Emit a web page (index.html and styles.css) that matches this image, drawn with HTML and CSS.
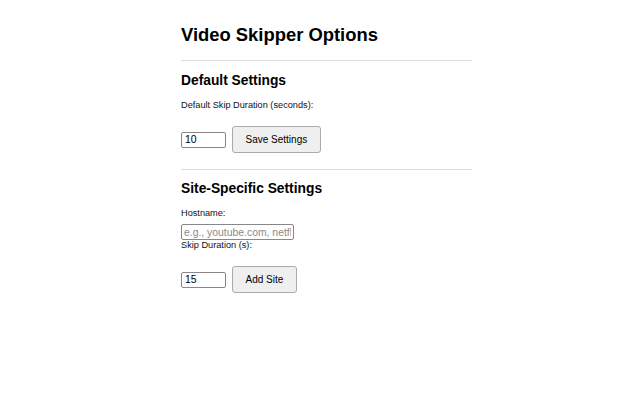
FILE: index.html
```html
<!DOCTYPE html>
<html lang="en">
<head>
<meta charset="utf-8">
<title>Video Skipper Options</title>
<link rel="stylesheet" href="styles.css">
</head>
<body>
<main class="page">
  <h1 class="title">Video Skipper Options</h1>
  <hr class="divider">
  <section class="section">
    <h2 class="section-title">Default Settings</h2>
    <label class="field-label" for="defaultSkip">Default Skip Duration (seconds):</label>
    <div class="row">
      <input type="number" id="defaultSkip" class="num-input" value="10">
      <button class="btn btn-save" type="button">Save Settings</button>
    </div>
  </section>
  <hr class="divider divider-lower">
  <section class="section">
    <h2 class="section-title section-title-lower">Site-Specific Settings</h2>
    <label class="field-label" for="hostname">Hostname:</label>
    <input type="text" id="hostname" class="text-input" placeholder="e.g., youtube.com, netflix.com">
    <label class="field-label field-label-tight" for="siteSkip">Skip Duration (s):</label>
    <div class="row">
      <input type="number" id="siteSkip" class="num-input" value="15">
      <button class="btn btn-add" type="button">Add Site</button>
    </div>
  </section>
</main>
</body>
</html>
```
FILE: styles.css
```css
html, body {
  margin: 0;
  padding: 0;
  background: #ffffff;
}

body {
  font-family: "Liberation Sans", Arial, Helvetica, sans-serif;
  color: #000000;
}

.page {
  display: flex;
  flex-direction: column;
  width: 291px;
  margin-left: 181px;
  padding-top: 24px;
}

.title {
  margin: 0;
  font-size: 18.4px;
  line-height: 22px;
  font-weight: bold;
}

.divider {
  margin: 14px 0 0;
  border: 0;
  border-top: 1px solid #dedede;
  height: 0;
  width: 100%;
}

.divider-lower {
  margin-top: 16px;
}

.section {
  display: flex;
  flex-direction: column;
}

.section-title {
  margin: 12px 0 0;
  font-size: 13.8px;
  line-height: 16px;
  font-weight: bold;
}

.section-title-lower {
  margin-top: 11px;
}

.field-label {
  display: block;
  margin-top: 11px;
  font-size: 9.2px;
  line-height: 11px;
  color: #111111;
}

.field-label-tight {
  margin-top: 0;
}

.row {
  display: flex;
  align-items: center;
  gap: 6px;
  margin-top: 15px;
}

.num-input,
.text-input {
  box-sizing: border-box;
  height: 16px;
  margin: 0;
  padding: 0 2px;
  border: 1px solid #888888;
  border-radius: 2px;
  font-family: "Liberation Sans", Arial, Helvetica, sans-serif;
  font-size: 10.4px;
  color: #000000;
  background: #ffffff;
}

.num-input {
  width: 45px;
  padding-left: 3px;
  -moz-appearance: textfield;
  appearance: textfield;
}

.num-input::-webkit-outer-spin-button,
.num-input::-webkit-inner-spin-button {
  -webkit-appearance: none;
  margin: 0;
}

.text-input {
  align-self: flex-start;
  width: 113px;
  margin-top: 5px;
}

.text-input::placeholder {
  color: #8a8a8a;
}

.btn {
  box-sizing: border-box;
  height: 27px;
  margin: 0;
  padding: 0 12.5px;
  border: 1px solid #aaaaaa;
  border-radius: 3px;
  background: #efefef;
  color: #000000;
  font-family: "Liberation Sans", Arial, Helvetica, sans-serif;
  font-size: 10px;
}
```
